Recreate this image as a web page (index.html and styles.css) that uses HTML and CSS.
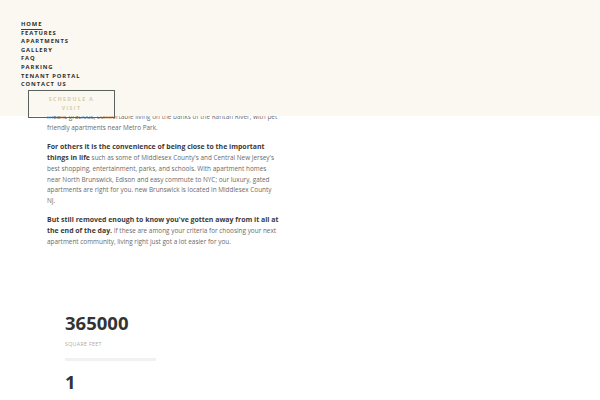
FILE: index.html
```html
<!DOCTYPE html>
<html>
<head>
<meta charset="utf-8">
<link rel="stylesheet" href="styles.css">
</head>
<body>
<header class="site-header">
  <nav class="nav">
    <a class="nav-link active" href="#">HOME</a>
    <a class="nav-link" href="#">FEATURES</a>
    <a class="nav-link" href="#">APARTMENTS</a>
    <a class="nav-link" href="#">GALLERY</a>
    <a class="nav-link" href="#">FAQ</a>
    <a class="nav-link" href="#">PARKING</a>
    <a class="nav-link" href="#">TENANT PORTAL</a>
    <a class="nav-link" href="#">CONTACT US</a>
  </nav>
  <a class="visit-btn" href="#">SCHEDULE A<br>VISIT</a>
</header>
<main class="content">
  <section class="intro">
    <p>means gracious, comfortable living on the banks of the Raritan River, with pet friendly apartments near Metro Park.</p>
    <p><strong>For others it is the convenience of being close to the important things in life</strong> such as some of Middlesex County's and Central New Jersey's best shopping, entertainment, parks, and schools. With apartment homes near North Brunswick, Edison and easy commute to NYC; our luxury, gated apartments are right for you. new Brunswick is located in Middlesex County<br>NJ.</p>
    <p><strong>But still removed enough to know you've gotten away from it all at the end of the day.</strong> If these are among your criteria for choosing your next apartment community, living right just got a lot easier for you.</p>
  </section>
  <section class="stats">
    <div class="stat">
      <div class="stat-num">365000</div>
      <div class="stat-label">SQUARE FEET</div>
      <div class="stat-bar"></div>
    </div>
    <div class="stat">
      <div class="stat-num">1</div>
    </div>
  </section>
</main>
</body>
</html>
```
FILE: styles.css
```css
html, body {
  margin: 0;
  padding: 0;
  background: #ffffff;
}
body {
  font-family: "Open Sans", "DejaVu Sans", sans-serif;
  width: 600px;
  height: 400px;
  overflow: hidden;
}
.site-header {
  position: fixed;
  top: 0;
  left: 0;
  right: 0;
  height: 116px;
  background: #faf8f1;
  box-sizing: border-box;
  padding: 20px 0 0 21px;
  z-index: 5;
}
.nav {
  display: flex;
  flex-direction: column;
  align-items: flex-start;
}
.nav-link {
  font-size: 5.8px;
  line-height: 8.6px;
  font-weight: 700;
  letter-spacing: 0.9px;
  color: #2e2e2e;
  text-decoration: none;
}
.nav-link.active {
  color: #26332b;
  text-decoration: underline;
  text-decoration-color: #2f4a3a;
  text-decoration-thickness: 1.2px;
  text-underline-offset: 3px;
}
.visit-btn {
  display: block;
  width: 87px;
  height: 28px;
  box-sizing: border-box;
  margin: 1px 0 0 7px;
  border: 1px solid #5b615c;
  color: #d8cda6;
  font-size: 5.2px;
  font-weight: 700;
  letter-spacing: 1.4px;
  line-height: 9px;
  text-align: center;
  padding-top: 4px;
  text-decoration: none;
}
.content {
  padding: 112px 0 0 47px;
}
.intro {
  width: 234.5px;
}
.intro p {
  margin: 0 0 8px 0;
  font-size: 6.4px;
  line-height: 10.9px;
  color: #6a6a6a;
}
.intro strong {
  color: #3a3a3a;
  font-weight: 700;
  font-size: 6.95px;
}
.stats {
  padding: 56px 0 0 18px;
  display: flex;
  flex-direction: column;
}
.stat-num {
  font-size: 18.5px;
  font-weight: 700;
  color: #333;
  line-height: 22px;
}
.stat-label {
  font-size: 5.3px;
  letter-spacing: 0.3px;
  color: #aaa;
  margin-top: 6px;
}
.stat-bar {
  width: 91px;
  height: 3px;
  background: #f1f1f1;
  margin: 10px 0 10px 0;
}
```
